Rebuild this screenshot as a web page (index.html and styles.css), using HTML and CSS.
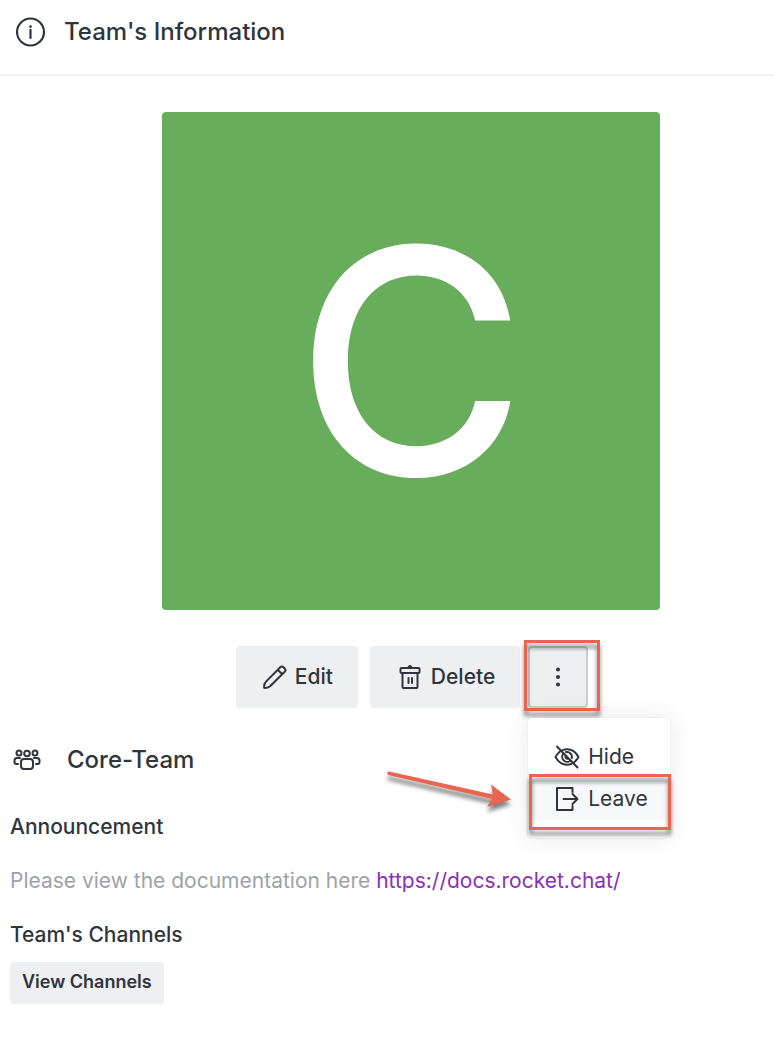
FILE: index.html
```html
<!DOCTYPE html>
<html lang="en">
<head>
<meta charset="utf-8">
<meta name="viewport" content="width=device-width, initial-scale=1">
<title>Team's Information</title>
<link rel="stylesheet" href="styles.css">
</head>
<body>
<header class="header">
  <svg class="header-icon" width="30" height="30" viewBox="0 0 30 30" aria-hidden="true">
    <circle cx="14.5" cy="15" r="13.5" fill="none" stroke="currentColor" stroke-width="2.2"/>
    <circle cx="14.5" cy="9.6" r="1.3" fill="currentColor"/>
    <path d="M14.500 12.800V21" fill="none" stroke="currentColor" stroke-width="2.2" stroke-linecap="round"/>
  </svg>
  <h1 class="title">Team's Information</h1>
</header>
<main class="content">
  <section class="profile">
    <div class="avatar">C</div>
    <div class="actions">
      <button class="button" type="button">
        <svg width="24" height="26" viewBox="1 0 24 26" class="line-icon" aria-hidden="true">
          <path d="M2.200 23.800c-.3-2.500.3-4.600 1.800-6.200L18.300 3.300c1-1 2.200-1 3.200 0l1.200 1.200c1 1 1 2.200 0 3.200L8.400 22C6.800 23.500 4.700 24.100 2.200 23.800zM15.800 5.800l4.400 4.400"/>
        </svg>
        <span>Edit</span>
      </button>
      <button class="button" type="button">
        <svg width="26" height="26" viewBox="-1 0 26 26" class="line-icon" aria-hidden="true">
          <path d="M3.500 4h17q1 0 1 1v3q0 1-1 1H3.500q-1 0-1-1V5q0-1 1-1zM4.500 9v14q0 1 1 1h13q1 0 1-1V9M10.500 14v5M14 14v5"/>
          <path d="M10 3.500a2 2 0 0 1 4 0z" fill="currentColor" stroke-width="1"/>
        </svg>
        <span>Delete</span>
      </button>
      <div class="more">
        <button class="button button-more" type="button" aria-label="More" aria-expanded="true">
          <svg width="6" height="22" viewBox="0 0 6 22" fill="currentColor" aria-hidden="true">
            <circle cx="3" cy="3.500" r="2"/><circle cx="3" cy="11" r="2"/><circle cx="3" cy="18.500" r="2"/>
          </svg>
        </button>
        <span class="mark mark-more"></span>
        <div class="menu">
          <button class="menu-item" type="button">
            <svg width="26" height="24" viewBox="0 0 26 24" class="line-icon" aria-hidden="true">
              <path d="M9 4.900A14 14 0 0 1 13 4.300c5 0 9 3 11.500 7.700a17 17 0 0 1-4 5M6 6.500A17 17 0 0 0 1.500 12c2.500 4.700 6.500 7.700 11.500 7.700a12 12 0 0 0 4.500-.9M9.500 8.500a5 5 0 0 0 6.500 7.500M12 7.100a5 5 0 0 1 5.800 6M12 10.500a2 2 0 0 0 2.500 3M3 1.500l20.500 21"/>
            </svg>
            <span>Hide</span>
          </button>
          <button class="menu-item menu-item-active" type="button">
            <svg width="26" height="26" viewBox="0 0 26 26" class="line-icon" aria-hidden="true">
              <path d="M18.500 6V2H3v22h15.500v-4M9.500 13h14M18.500 8l5 5-5 5"/>
            </svg>
            <span>Leave</span>
          </button>
          <span class="mark mark-leave"></span>
          <svg class="arrow" width="130" height="50" viewBox="0 0 130 50" aria-hidden="true">
            <path d="M4 2.500L108 25.500L106 15.500L126 30.500L102 38L107 30L3 6Q1 3 4 2.500z" fill="#e9654f"/>
          </svg>
        </div>
      </div>
    </div>
  </section>
  <section class="team">
    <svg width="30" height="24" viewBox="0 0 30 24" class="line-icon" aria-hidden="true">
      <circle cx="7" cy="5" r="2.500"/><circle cx="15" cy="5.500" r="2.800"/><circle cx="23" cy="5" r="2.500"/>
      <path d="M12 11h6q3 0 3 3v4q0 3-3 3h-6q-3 0-3-3v-4q0-3 3-3zM8 10H5q-2.500 0-2.500 2.500v1.500q0 2 2 2H6M22 10h3q2.500 0 2.500 2.500v1.500q0 2-2 2H24"/>
    </svg>
    <h2 class="team-name">Core-Team</h2>
  </section>
  <section class="info">
    <h3 class="label">Announcement</h3>
    <p class="text">Please view the documentation here <a class="link" href="https://docs.rocket.chat/">https://docs.rocket.chat/</a></p>
  </section>
  <section class="channels">
    <h3 class="label">Team's Channels</h3>
    <button class="button button-small" type="button">View Channels</button>
  </section>
</main>
</body>
</html>
```
FILE: styles.css
```css
* {
  box-sizing: border-box;
}

body {
  margin: 0;
  background: #fff;
  color: #2f343d;
  font-family: Inter, "Liberation Sans", sans-serif;
  font-size: 21px;
  line-height: 28px;
}

h1, h2, h3, p {
  margin: 0;
  font-weight: 500;
}

.header {
  display: flex;
  align-items: center;
  gap: 18px;
  padding: 16px 16px 26px;
  border-bottom: 2px solid #f2f3f5;
}

.header-icon {
  flex: none;
}

.title,
.team-name {
  font-size: 24px;
  line-height: 32px;
}

.content {
  padding: 36px 10px;
}

.profile {
  display: flex;
  flex-direction: column;
  align-items: center;
  gap: 36px;
  padding-left: 48px;
}

.avatar {
  display: flex;
  align-items: center;
  justify-content: center;
  width: 100%;
  max-width: 498px;
  aspect-ratio: 1;
  border-radius: 4px;
  background: #68ad5c;
  color: #fff;
  font-size: 314px;
  font-weight: 450;
  line-height: 1;
}

.actions {
  display: flex;
  gap: 12px;
  padding-left: 2px;
}

.button {
  display: flex;
  align-items: center;
  justify-content: center;
  gap: 8px;
  padding: 17px 25px 17px 27px;
  border: 0;
  border-radius: 4px;
  background: #eeeff1;
  color: inherit;
  font: inherit;
  font-weight: 500;
}

.line-icon {
  flex: none;
  fill: none;
  stroke: currentColor;
  stroke-width: 2;
  stroke-linecap: round;
  stroke-linejoin: round;
}

.more {
  position: relative;
  margin-left: -4px;
}

.button-more {
  width: 60px;
  height: 62px;
  padding: 0;
  border: 2px solid #caccd1;
}

.mark {
  position: absolute;
  border: 3px solid #e9654f;
  filter: drop-shadow(0 5px 2px rgba(0, 0, 0, 0.5));
  pointer-events: none;
}

.mark-more {
  top: -6px;
  left: -4px;
  width: 76px;
  height: 71px;
}

.menu {
  position: absolute;
  top: 72px;
  left: 0;
  width: 142px;
  padding: 18px 0;
  border-radius: 4px;
  background: #fff;
  box-shadow: 0 0 2px rgba(47, 52, 61, 0.1), 0 0 24px rgba(47, 52, 61, 0.1);
}

.menu-item {
  display: flex;
  align-items: center;
  gap: 8px;
  width: 100%;
  padding: 7px 26px;
  border: 0;
  background: none;
  color: inherit;
  font: inherit;
  text-align: left;
}

.menu-item-active {
  background: #f7f8fa;
}

.mark-leave {
  top: 56px;
  left: 1px;
  width: 142px;
  height: 56px;
}

.arrow {
  position: absolute;
  top: 51px;
  right: 155px;
  overflow: visible;
  filter: drop-shadow(0 5px 2px rgba(0, 0, 0, 0.5));
  pointer-events: none;
}

.team {
  display: flex;
  align-items: center;
  gap: 25px;
  margin-top: 36px;
  padding-left: 2px;
}

.info {
  display: grid;
  gap: 26px;
  margin-top: 37px;
}

.label {
  font-size: 21px;
}

.text {
  color: #9ea2a8;
  font-weight: 400;
}

.link {
  color: #8b2fb8;
  text-decoration: none;
}

.channels {
  display: grid;
  justify-items: start;
  gap: 13px;
  margin-top: 26px;
}

.button-small {
  padding: 6px 12px 8px;
  font-size: 18px;
  font-weight: 600;
}
```
